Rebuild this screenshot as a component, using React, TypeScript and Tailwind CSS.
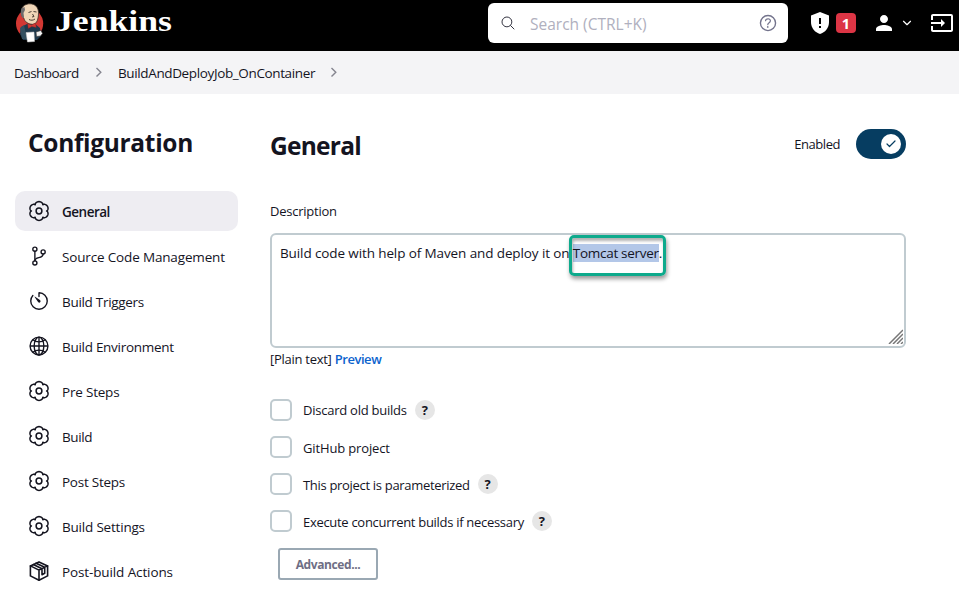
import type { ReactNode } from "react";
import {
  IoGitBranchOutline,
  IoTimerOutline,
  IoGlobeOutline,
  IoSearchOutline,
  IoHelpCircleOutline,
} from "react-icons/io5";
import { MdInput, MdPerson } from "react-icons/md";
import { Check, ChevronDown } from "lucide-react";

function Butler() {
  return (
    <svg width="30" height="40" viewBox="0 0 30 40">
      <ellipse cx="14.600" cy="20.500" rx="13.600" ry="14.500" fill="#d33833" />
      <path d="M6 24 12 21h8l5 4 1 8-4 4H8l-3-6z" fill="#1f3a4d" />
      <path d="M5 25 9 22l3 14H7z" fill="#335061" />
      <path d="M6.500 7C7 3 11 .8 15 .8c5 0 8.500 3.500 8.500 9 0 6-1.500 11.500-6 11.500-4 0-8-2.500-8.500-6C6.500 13.500 6 11 6.500 7z" fill="#f0d6b7" stroke="#3b3027" strokeWidth=".8" />
      <path d="M6.500 5.500C5.300 8 5.500 12 7.500 15l1.500-1-.5-4 1.500-3-.5-3z" fill="#6d6b6d" />
      <path d="M13.500 9.500l3-1M18.500 8.500l3 .5M17.500 11l1.500 2.500-2 .5M14 16.500c2 1 4 1 6-.5" stroke="#3b3027" strokeWidth=".9" fill="none" />
      <path d="M12.500 20.500l4 1.500 4-2 .8 4.500-4.500-1-3.500 2z" fill="#d33833" stroke="#81201f" strokeWidth=".4" />
      <path d="M11 29.500l8-.5.500 9.500-7 .500z" fill="#fff" stroke="#ccc" strokeWidth=".5" />
      <path d="M21 29l5-1.500 1.500 3-2 2.500-4 .500z" fill="#f3f3f3" stroke="#333" strokeWidth=".6" />
    </svg>
  );
}

function PackageIcon() {
  return (
    <svg width="20" height="20" viewBox="0 0 20 20" fill="none" stroke="currentColor" strokeWidth="1.600" strokeLinejoin="round" strokeLinecap="round">
      <path d="M10 .9 18.600 4.900v10L10 19.200 1.400 14.900v-10z" />
      <path d="M1.400 4.900 10 9.100l8.600-4.200M10 9.100v10M4.300 3.500l8.700 4.200v6l2.700-1.400V6.300L7.100 2.200" />
    </svg>
  );
}

// Six-lobed cog outline, one lobe pointing straight up.
const cogPath =
  Array.from({ length: 72 }, (_, i) => {
    const a = (i / 72) * Math.PI * 2;
    const r = 7.3 + 2.1 * Math.pow(Math.abs(Math.cos(3 * a)), 0.6);
    return `${i === 0 ? "M" : "L"}${(11 + 1.04 * r * Math.sin(a)).toFixed(2)} ${(11 - r * Math.cos(a)).toFixed(2)}`;
  }).join("") + "Z";

function Gear() {
  return (
    <svg width="22" height="22" viewBox="0 0 22 22" fill="none" stroke="currentColor" strokeWidth="1.500" strokeLinejoin="round">
      <path d={cogPath} />
      <circle cx="11" cy="11" r="2.900" />
    </svg>
  );
}

function Crumb() {
  return (
    <svg width="12" height="12" viewBox="0 0 12 12" fill="none" stroke="#85858f" strokeWidth="1.400">
      <path d="M3.500 1 7.800 5.300l-4.300 4.300" />
    </svg>
  );
}

const items: { label: string; icon: ReactNode; track: string }[] = [
  { label: "General", icon: <Gear />, track: "font-semibold tracking-[-0.5px]" },
  { label: "Source Code Management", icon: <IoGitBranchOutline size={22} />, track: "tracking-[-0.16px]" },
  { label: "Build Triggers", icon: <IoTimerOutline size={22} />, track: "tracking-[-0.3px]" },
  { label: "Build Environment", icon: <IoGlobeOutline size={22} />, track: "tracking-[-0.28px]" },
  { label: "Pre Steps", icon: <Gear />, track: "tracking-[-0.2px]" },
  { label: "Build", icon: <Gear />, track: "tracking-[-0.4px]" },
  { label: "Post Steps", icon: <Gear />, track: "tracking-[-0.25px]" },
  { label: "Build Settings", icon: <Gear />, track: "tracking-[-0.2px]" },
  { label: "Post-build Actions", icon: <PackageIcon />, track: "tracking-[-0.12px]" },
];

const options = [
  { label: "Discard old builds", help: true, track: "tracking-[-0.24px]" },
  { label: "GitHub project", help: false, track: "tracking-[-0.14px]" },
  { label: "This project is parameterized", help: true, track: "tracking-[-0.31px]" },
  { label: "Execute concurrent builds if necessary", help: true, track: "tracking-[-0.3px]" },
];

export default function App() {
  return (
    <div className="h-[590px] w-[959px] overflow-hidden bg-white font-['Open_Sans',sans-serif] text-[13.5px] leading-5 text-[#14141f]">
      <header className="flex h-[51px] bg-black text-white">
        <div className="ml-[15px] mt-[3px] w-[30px]"><Butler /></div>
        <div className="ml-[10px] mt-[3px] w-[433px]">
          <span className="inline-block origin-left scale-x-[1.23] font-['Liberation_Serif',serif] text-[29px] font-bold leading-9">Jenkins</span>
        </div>
        <div className="mt-[3px] flex h-10 w-[300px] items-center rounded-md bg-white pl-[12px] pr-[9px]">
          <IoSearchOutline size={16} className="text-[#333340]" />
          <span className="ml-[14px] mt-[2px] flex-1 text-[15.5px] text-[#b0b0be]">Search (CTRL+K)</span>
          <IoHelpCircleOutline size={22} className="text-[#73738c]" />
        </div>
        <svg className="ml-[22px] mt-[12px]" width="20" height="22" viewBox="0 0 20 22">
          <path d="M10 0 19 3.500V10c0 6-4 10.500-9 12C5 20.500 1 16 1 10V3.500z" fill="#fff" />
          <path d="M10 6v6M10 14v2" stroke="#000" strokeWidth="2" />
        </svg>
        <span className="ml-[6px] mt-[13px] flex h-5 w-5 items-center justify-center rounded bg-[#dc3545] pt-[2px] text-[14.5px] font-bold">1</span>
        <MdPerson size={24} className="ml-[16px] mt-[11px]" />
        <ChevronDown size={14} strokeWidth={2} className="ml-[4px] mt-[16px]" />
        <MdInput size={24} className="ml-[16px] mt-[11px] shrink-0" />
      </header>
      <nav className="flex h-[43px] items-center bg-[#f4f4f6] pl-[14px]">
        <span className="w-[79px] tracking-[-0.55px]">Dashboard</span>
        <Crumb />
        <span className="ml-[13px] w-[210px] tracking-[-0.37px]">BuildAndDeployJob_OnContainer</span>
        <Crumb />
      </nav>
      <div className="flex">
        <aside className="w-[255px] pl-[15px] pt-[33px]">
          <h1 className="pl-[13px] text-[24.5px] font-bold leading-8 tracking-[-0.32px]">Configuration</h1>
          <ul className="mt-[32px] flex w-[223px] flex-col gap-[5px]">
            {items.map((it, i) => (
              <li key={it.label} className={i === 0 ? "flex h-10 items-center rounded-[10px] bg-[#eeedf2] pl-[12px]" : "flex h-10 items-center pl-[12px]"}>
                <span className="flex w-6 justify-center">{it.icon}</span>
                <span className={"ml-[11px] mt-[2px] whitespace-nowrap " + it.track}>{it.label}</span>
              </li>
            ))}
          </ul>
        </aside>
        <main className="w-[704px] pl-[15px] pt-[35px]">
          <div className="flex h-[30px] w-[636px] items-center">
            <h2 className="flex-1 pt-[3px] text-[24.5px] font-bold leading-8 tracking-[-0.75px]">General</h2>
            <span className="mr-[16px] text-[13px] tracking-[-0.45px]">Enabled</span>
            <div className="flex h-[30px] w-[50px] items-center justify-end rounded-full bg-[#063d61] pr-[5px]">
              <span className="flex h-5 w-5 items-center justify-center rounded-full bg-white text-[#063d61]"><Check size={12} strokeWidth={2.4} /></span>
            </div>
          </div>
          <p className="mt-[42px] text-[13px] tracking-[-0.24px]">Description</p>
          <div className="relative mt-[12px] h-[115px] w-[636px] rounded-[6px] border-2 border-[#c0cbd0] pl-[8px] pt-[8px]">
            <p className="whitespace-nowrap"><span className="tracking-[-0.11px]">Build code with help of Maven and deploy it on </span><span className="bg-[#b3c7e8] tracking-[-0.3px]">Tomcat server</span>.</p>
            <div className="absolute left-[297px] top-0 h-[41px] w-[97px] rounded-[5px] border-[3px] border-[#0eaa8c] shadow-[1px_3px_4px_rgba(0,0,0,0.4),inset_1px_3px_3px_rgba(0,0,0,0.3)]" />
            <svg className="absolute bottom-[2px] right-[1px]" width="15" height="15" viewBox="0 0 15 15" stroke="#777" strokeWidth="1.500">
              <path d="M1 15 15 1M5 15 15 5M9 15l6-6M13 15l2-2" />
            </svg>
          </div>
          <p className="mt-[1px] text-[13px] tracking-[-0.27px]">[Plain text] <span className="font-semibold tracking-[-0.45px] text-[#0b63ce]">Preview</span></p>
          <div className="mt-[30px]">
            {options.map((o) => (
              <div key={o.label} className="flex h-[37px] items-start">
                <span className="h-[22px] w-[22px] rounded-[5px] border-2 border-[#c0cbd0]" />
                <span className={(o.label === "Discard old builds" ? "mt-px" : "mt-[2px]") + " ml-[11px] whitespace-nowrap text-[13px] " + o.track}>{o.label}</span>
                {o.help && <span className="ml-[8px] mt-px flex h-5 w-5 items-center justify-center rounded-full bg-[#e6e6e6] text-[13px] font-bold">?</span>}
              </div>
            ))}
          </div>
          <button className="ml-[8px] mt-px flex h-[32px] w-[100px] items-center justify-center rounded-[3px] border-2 border-[#9aa8b3] pt-[2px] text-[12px] font-bold tracking-[-0.4px] text-[#6e6e85]">Advanced...</button>
        </main>
      </div>
    </div>
  );
}
